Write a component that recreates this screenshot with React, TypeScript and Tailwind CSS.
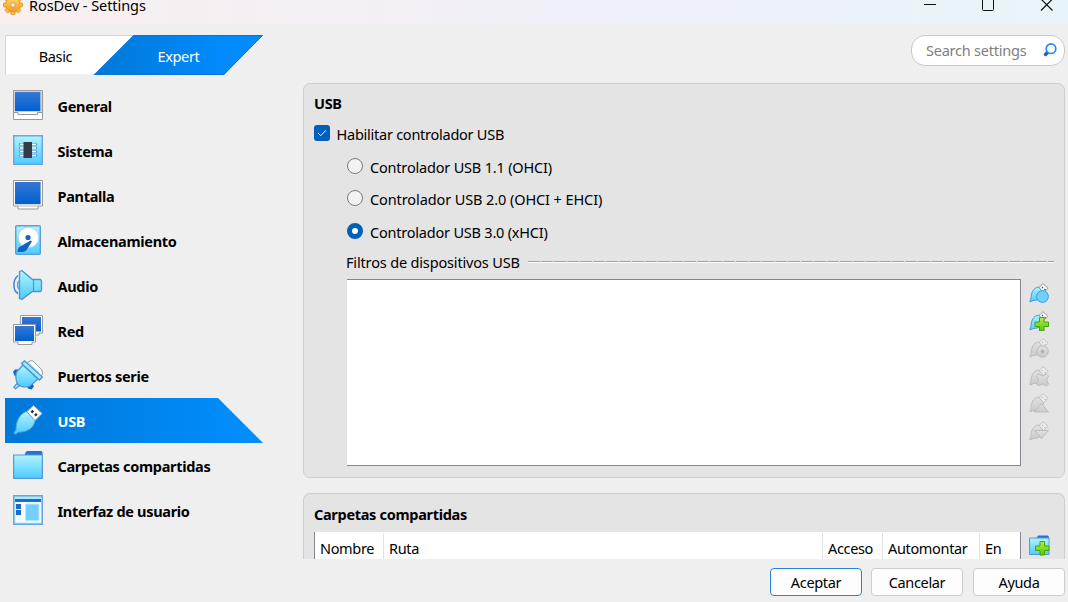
import React from "react";

const svgProps = { xmlns: "http://www.w3.org/2000/svg", className: "block shrink-0" };

function Defs() {
  return (
    <svg className="absolute size-0" aria-hidden="true">
      <defs>
        <linearGradient id="screen" x1="0" y1="0" x2="0" y2="1">
          <stop offset="0" stopColor="#3578d3" />
          <stop offset="1" stopColor="#005fd2" />
        </linearGradient>
        <linearGradient id="sky" x1="0" y1="0" x2="0" y2="1">
          <stop offset="0" stopColor="#b0f3fd" />
          <stop offset="1" stopColor="#4dcbfe" />
        </linearGradient>
        <linearGradient id="leaf" x1="0" y1="0" x2="0" y2="1">
          <stop offset="0" stopColor="#b5ee4c" />
          <stop offset="1" stopColor="#55c705" />
        </linearGradient>
        <linearGradient id="gold" x1="0" y1="0" x2="0" y2="1">
          <stop offset="0" stopColor="#ffd66b" />
          <stop offset="1" stopColor="#f09a1c" />
        </linearGradient>
        <linearGradient id="ash" x1="0" y1="0" x2="0" y2="1">
          <stop offset="0" stopColor="#e2e2e2" />
          <stop offset="1" stopColor="#c9c9c9" />
        </linearGradient>
      </defs>
    </svg>
  );
}

function Icon({ children }: { children: React.ReactNode }) {
  return (
    <svg {...svgProps} width="30" height="30" viewBox="0 0 30 30">
      {children}
    </svg>
  );
}

const GeneralIcon = () => (
  <Icon>
    <path d="M.5 .5h29v29H.5z" fill="#fff" stroke="#999" />
    <path d="M1.5 1.5h27v20h-27z" fill="#fff" stroke="#cfd3d9" />
    <path d="M2 2h25.500v19H2z" fill="url(#screen)" />
    <path d="M.5 22.500H5v2h19.500v-2h5" fill="none" stroke="#999" />
  </Icon>
);

const SistemaIcon = () => (
  <Icon>
    <path d="M.75 .75h28.500v28.500H.75z" fill="url(#sky)" stroke="#6fa5df" strokeWidth="1.500" />
    <path d="M6 9.500h18M6 13h18M6 16.500h18M6 20.500h18" stroke="#5c9bd0" strokeWidth="2.400" />
    <path d="M7 9.500h16M7 13h16M7 16.500h16M7 20.500h16" stroke="#eaffff" strokeWidth="1.500" />
    <path d="M10.500 7h8.500v16h-8.500z" fill="#343b44" />
  </Icon>
);

const PantallaIcon = () => (
  <Icon>
    <path d="M.5 .5h29v25.500H25v3H5v-3H.5z" fill="#fff" stroke="#999" />
    <path d="M5 26h20" stroke="#b5b5b5" />
    <path d="M2 2h26v23H2z" fill="#d5d9df" />
    <path d="M2 2h25.500v22H2z" fill="url(#screen)" />
  </Icon>
);

const DiskIcon = () => (
  <Icon>
    <rect x="2.700" y=".7" width="24.600" height="28.600" rx="1.200" fill="url(#sky)" stroke="#5c9fd8" strokeWidth="1.400" />
    <circle cx="15.500" cy="12.500" r="10.300" fill="#fff" stroke="#9ed2ee" strokeWidth=".8" />
    <circle cx="15" cy="12.500" r="2.600" fill="#1464c8" />
    <path d="M17.500 15.500l1.500 1-5.500 8.500c-1.500 2.300-4 2.200-9 2 0-3 .8-4.500 3-5.500z" fill="#0d61cb" />
  </Icon>
);

const AudioIcon = () => (
  <Icon>
    <path d="M5 5.500C-.5 10-.5 20 5 23.500" fill="none" stroke="#3c82d2" strokeWidth="1.500" />
    <path d="M7 11H5.500C4 12.500 4 17.500 5.500 19H7" fill="#87dffa" stroke="#4a94d5" />
    <path d="M6.500 1.500L9 .7 19.500 9.500h8l1 1.500v9l-1 1.500h-8L9 29.300l-2.500-.8z" fill="url(#sky)" stroke="#4a94d5" strokeWidth="1.300" />
    <path d="M20.500 10v11" stroke="#4a94d5" strokeWidth="1.100" />
  </Icon>
);

const RedIcon = () => (
  <Icon>
    <path d="M7.500 .5h22V18H26v2H12V18H7.500z" fill="#fff" stroke="#999" />
    <path d="M9 2h19v14.500H9z" fill="url(#screen)" />
    <path d="M.5 9.500h22V27H19v2.500H5V27H.5z" fill="#fff" stroke="#999" />
    <path d="M2 11h19v15H2z" fill="url(#screen)" />
  </Icon>
);

const SerialIcon = () => (
  <Icon>
    <path d="M14 3L17.500 .7l2.500.3L29 10l.5 4-3 3z" fill="#fff" stroke="#999" />
    <path d="M0 12l2-2.500h4l1 4-5 3zM14 26l5-3 2 3.500-2.500 3-3.500-1z" fill="#0d61cb" />
    <path d="M5.500 22L.8 27l1.700 1.700 5.500-4.200" fill="#a5eafa" stroke="#4a94d5" strokeWidth="1.200" />
    <path d="M10 5L3.500 12c-1 4-1 8 1 12 3 2.800 7.500 3.500 12 2.500L25 19z" fill="url(#sky)" stroke="#4a94d5" strokeWidth="1.200" />
    <path d="M8.500 3.500L11.500 .8 29.300 17l-2.800 3z" fill="#9cecfc" stroke="#4a94d5" strokeWidth="1.300" />
    <path d="M16.500 4L26 13" stroke="#78bfe4" />
  </Icon>
);

const UsbIcon = () => (
  <Icon>
    <path d="M13.500 7L20.500 .5 29 8.500 21.500 16z" fill="#fff" stroke="#aab0b5" />
    <path d="M17.500 6.500l2-1.800 1.700 1.800-2 1.900zM21 9.700l2-1.600 1.700 1.600-2 1.900z" fill="#333" />
    <path d="M13.500 6.500L22 15.500C21 22.500 15 27 5.500 27.300L2 29.300l-1.200-1.200L3 25C3 15.500 7 8.500 13.500 6.500z" fill="url(#sky)" stroke="#52a4d6" />
  </Icon>
);

const FolderIcon = () => (
  <Icon>
    <path d="M11.500 5l1.500-3.500L14.500 1H28l1.500 1v5h-18z" fill="#2c70d0" />
    <path d="M.6 5h28.800v23.400H.6z" fill="url(#sky)" stroke="#5799d7" strokeWidth="1.200" />
  </Icon>
);

const InterfaceIcon = () => (
  <Icon>
    <path d="M.7 .7h28.600v28.600H.7z" fill="#a9eafb" stroke="#6aa4dd" strokeWidth="1.400" />
    <path d="M2.500 4H28v23.500H2.500z" fill="#f7fdff" />
    <path d="M2 4h26v3H2zM3 9h5v5H3zM3 15h5v5H3z" fill="#1e69cf" />
    <path d="M12.500 9H26v16.500H12.500z" fill="#74ceff" stroke="#b5e7fb" />
  </Icon>
);

type Tool = "circle" | "add" | "edit" | "remove" | "up" | "down";

const toolShapes: Record<Tool, React.ReactNode> = {
  circle: <circle cx="13.500" cy="13.500" r="5.900" fill="#70cffb" stroke="#369ee0" />,
  add: <path d="M10.500 6.500h4.500v4.500h4.500v4.500H15v4.500h-4.500v-4.500H6v-4.500h4.500z" fill="url(#leaf)" stroke="#45a30b" />,
  edit: (
    <g stroke="#b9b9b9" fill="url(#ash)">
      <circle cx="13.500" cy="13.500" r="5.700" />
      <circle cx="13.500" cy="13.500" r="1.500" fill="#aaa" />
    </g>
  ),
  remove: <path d="M7.500 10l2-2 4 2 4-2 2 2-2 4 2 4-2 2-4-2-4 2-2-2 2-4z" fill="url(#ash)" stroke="#bcbcbc" />,
  up: <path d="M12.500 10.500l7 8.500H5z" fill="url(#ash)" stroke="#bcbcbc" />,
  down: <path d="M5.500 9.500h14l-7 8z" fill="url(#ash)" stroke="#bcbcbc" />,
};

function ToolIcon({ kind }: { kind: Tool }) {
  const active = kind === "circle" || kind === "add";
  return (
    <svg {...svgProps} width="20" height="20" viewBox="0 0 20 20">
      <path d="M10 4.500L14 .7l5 4.500-5 5z" fill={active ? "#fff" : "#eee"} stroke={active ? "#999" : "#c2c2c2"} />
      <path d="M13 4l1 1M15.500 6l1 1" stroke={active ? "#444" : "#bbb"} strokeWidth="1.200" />
      <path
        d="M9.500 4l5 5.500C14 14 11 17.500 4 17.500L1.500 19 .7 18 2 16C2 10 4 5 9.500 4z"
        fill={active ? "url(#sky)" : "url(#ash)"}
        stroke={active ? "#439bd5" : "#bcbcbc"}
      />
      {toolShapes[kind]}
    </svg>
  );
}

const FolderAddIcon = () => (
  <svg {...svgProps} width="21" height="21" viewBox="0 0 21 21">
    <path d="M7.500 3L9 .5h10L20 2v3H7.500z" fill="#2c70d0" />
    <path d="M.5 3h19.500v16.500H.5z" fill="url(#sky)" stroke="#5799d7" />
    <path d="M11 6.500h4.500V11H20v4.500h-4.500V20H11v-4.500H6.500V11H11z" fill="url(#leaf)" stroke="#45a30b" />
  </svg>
);

const GearIcon = () => (
  <svg {...svgProps} width="20" height="20" viewBox="-10 -10 20 20">
    <g fill="url(#gold)" stroke="#dc8b27" strokeWidth=".8">
      {[0, 45, 90, 135, 180, 225, 270, 315].map((a) => (
        <path key={a} d="M-2.500-6l.8-3.500h3.400L2.500-6z" transform={`rotate(${a})`} />
      ))}
    </g>
    <circle r="7" fill="url(#gold)" />
    <circle r="2.300" fill="#f8eef0" stroke="#dc8b27" strokeWidth=".8" />
  </svg>
);

const navItems = [
  { label: "General", icon: <GeneralIcon /> },
  { label: "Sistema", icon: <SistemaIcon /> },
  { label: "Pantalla", icon: <PantallaIcon /> },
  { label: "Almacenamiento", icon: <DiskIcon /> },
  { label: "Audio", icon: <AudioIcon /> },
  { label: "Red", icon: <RedIcon /> },
  { label: "Puertos serie", icon: <SerialIcon /> },
  { label: "USB", icon: <UsbIcon /> },
  { label: "Carpetas compartidas", icon: <FolderIcon /> },
  { label: "Interfaz de usuario", icon: <InterfaceIcon /> },
];

function TitleBar() {
  return (
    <header className="flex h-6 shrink-0 items-start bg-linear-to-r from-[#f9efef] via-[#f1f0f8] to-[#e8f5f8]">
      <div className="-mt-[5px] ml-[3px]"><GearIcon /></div>
      <h1 className="ml-[6px] leading-[10px] tracking-[-0.07px]">RosDev - Settings</h1>
      <svg {...svgProps} className="ml-auto" width="148" height="14" viewBox="0 0 148 14" fill="none" stroke="#111">
        <path d="M4 4.500h12" />
        <rect x="62.500" y="-1" width="11" height="11.500" rx="1" />
        <path d="M121 -1l11.500 11.500M132.500 -1L121 10.500" strokeWidth="1.200" />
      </svg>
    </header>
  );
}

function Tabs() {
  return (
    <div className="grid h-10 w-[258px]">
      <svg {...svgProps} className="col-start-1 row-start-1" width="258" height="40" viewBox="0 0 258 40">
        <defs>
          <linearGradient id="tab" x1="0" x2="1">
            <stop offset="0" stopColor="#0078d7" />
            <stop offset=".8" stopColor="#008bff" />
          </linearGradient>
        </defs>
        <path d="M.5 39V.5h128L89 39z" fill="#fff" />
        <path d="M.5 39.500V.5H128" fill="none" stroke="#d6d6d6" />
        <path d="M128.500 0H258L219 40H88.500z" fill="url(#tab)" />
        <path d="M128.500 .5H257.500L218.500 39.500H89" fill="none" stroke="#0875cc" />
      </svg>
      <div className="col-start-1 row-start-1 flex items-center pt-px tracking-[-0.34px]">
        <span className="w-[101px] text-center">Basic</span>
        <span className="w-[145px] text-center text-white">Expert</span>
      </div>
    </div>
  );
}

function Sidebar() {
  return (
    <aside className="w-[258px] shrink-0">
      <Tabs />
      <nav className="mt-2">
        {navItems.map((item) => (
          <div
            key={item.label}
            className={
              item.label === "USB"
                ? "flex h-[45px] items-center bg-linear-to-r from-[#0078d7] to-[#008fff] pl-2 text-white [clip-path:polygon(0_0,213px_0,258px_100%,0_100%)]"
                : "flex h-[45px] items-center pl-2"
            }
          >
            <div className="-mt-px">{item.icon}</div>
            <span className="mt-px ml-[14.500px] font-bold tracking-[-0.31px]">{item.label}</span>
          </div>
        ))}
      </nav>
    </aside>
  );
}

function Radio({ label, checked, className }: { label: string; checked?: boolean; className: string }) {
  return (
    <label className={`flex items-center pl-[33px] ${className}`}>
      <span
        className={
          checked
            ? "-mt-px size-4 rounded-full border-[5px] border-[#005fb8] bg-white"
            : "-mt-[2px] size-4 rounded-full border border-[#7a7a7a] bg-[#f2f2f2]"
        }
      />
      <span className="ml-[7px]">{label}</span>
    </label>
  );
}

function UsbPanel() {
  const tools: Tool[] = ["circle", "add", "edit", "remove", "up", "down"];
  return (
    <section className="h-[395px] shrink-0 rounded-[7px] border border-[#cecece] bg-[#e4e4e4] pr-[10px] pl-[10px]">
      <h2 className="-mt-px flex h-10 items-center font-bold tracking-[-0.31px]">USB</h2>
      <label className="mt-px flex h-5 items-center">
        <span className="-mt-[2px] flex size-4 items-center justify-center rounded-[3px] bg-[#005fb8]">
          <svg {...svgProps} width="10" height="10" viewBox="0 0 10 10" fill="none" stroke="#fff">
            <path d="M1 5l2.700 2.700L9 2.200" />
          </svg>
        </span>
        <span className="-mt-px ml-[6.500px] tracking-[-0.25px]">Habilitar controlador USB</span>
      </label>
      <div className="mt-[6px]">
        <Radio label="Controlador USB 1.1 (OHCI)" className="h-[33px] tracking-[-0.19px]" />
        <Radio label="Controlador USB 2.0 (OHCI + EHCI)" className="h-8 tracking-[-0.100px]" />
        <Radio label="Controlador USB 3.0 (xHCI)" checked className="h-[33px] tracking-[-0.21px]" />
      </div>
      <div className="flex h-[31px] items-center pl-8 tracking-[-0.16px]">
        <span className="-mt-1">Filtros de dispositivos USB</span>
        <svg {...svgProps} className="-mt-[2px] ml-auto" width="526" height="3" viewBox="0 0 526 3">
          <path d="M0 .5h526" stroke="#a0a0a0" strokeDasharray="12 1" />
          <path d="M0 1.500h526" stroke="#fff" strokeDasharray="12 1" />
        </svg>
      </div>
      <div className="flex pl-[33px]">
        <div className="h-[187px] w-[674px] border border-l-0 border-[#828790] bg-white" />
        <div className="ml-2 flex flex-col gap-[7.500px] pt-[4px]">
          {tools.map((t) => <ToolIcon key={t} kind={t} />)}
        </div>
      </div>
    </section>
  );
}

function FoldersPanel() {
  return (
    <section className="mt-[15px] h-[66px] shrink-0 overflow-hidden rounded-t-[7px] border border-b-0 border-[#cecece] bg-[#e4e4e4] px-[10px]">
      <h2 className="flex h-[38px] items-center pt-[2px] font-bold tracking-[-0.31px]">Carpetas compartidas</h2>
      <div className="flex">
        <div className="flex h-7 w-[707px] border-x border-[#828790] bg-white pt-px leading-[31px] tracking-[-0.34px]">
          <span className="w-[69px] border-r border-[#e2e2e2] pl-[5px]">Nombre</span>
          <span className="w-[439px] border-r border-[#e2e2e2] pl-[5px]">Ruta</span>
          <span className="w-[60px] border-r border-[#e2e2e2] pl-[5px]">Acceso</span>
          <span className="w-[97px] border-r border-[#e2e2e2] pl-[5px]">Automontar</span>
          <span className="pl-[5px]">En</span>
        </div>
        <div className="mt-[3px] ml-2"><FolderAddIcon /></div>
      </div>
    </section>
  );
}

export default function App() {
  return (
    <main className="flex h-[602px] w-[1068px] flex-col overflow-hidden bg-[#efefef] font-['Noto_Sans','Open_Sans',sans-serif] text-[14.500px] leading-5 tracking-[-0.34px] whitespace-nowrap text-black">
      <Defs />
      <TitleBar />
      <div className="flex h-[535px] shrink-0 pt-[11px] pl-[5px]">
        <Sidebar />
        <div className="ml-10 flex w-[762px] flex-col">
          <div className="ml-auto flex h-[31px] w-[154px] shrink-0 items-center rounded-[14px] border border-[#c8c8c8] bg-white pl-[14px] text-[#808080]">
            <span className="-mt-[2px] tracking-[-0.23px]">Search settings</span>
            <svg {...svgProps} className="-mt-px mr-[7px] ml-auto" width="14" height="14" viewBox="0 0 14 14" fill="none">
              <path d="M4.500 9.500l-2 2" stroke="#1667cb" strokeWidth="3.500" strokeLinecap="round" />
              <circle cx="8" cy="5.700" r="4.800" fill="#f8fdff" stroke="#258bea" strokeWidth="1.700" />
            </svg>
          </div>
          <div className="mt-[17px] flex flex-col">
            <UsbPanel />
            <FoldersPanel />
          </div>
        </div>
      </div>
      <footer className="flex justify-end gap-[10px] pt-[9px] pr-[3px]">
        <button className="-mr-px h-7 w-[92px] rounded border border-[#2685d2] bg-[#fdfdfd]"><span className="-mt-px block">Aceptar</span></button>
        <button className="h-7 w-[92px] rounded border border-[#cdcdcd] bg-[#fdfdfd]"><span className="-mt-px block">Cancelar</span></button>
        <button className="h-7 w-[92px] rounded border border-[#cdcdcd] bg-[#fdfdfd]"><span className="-mt-px block">Ayuda</span></button>
      </footer>
    </main>
  );
}
